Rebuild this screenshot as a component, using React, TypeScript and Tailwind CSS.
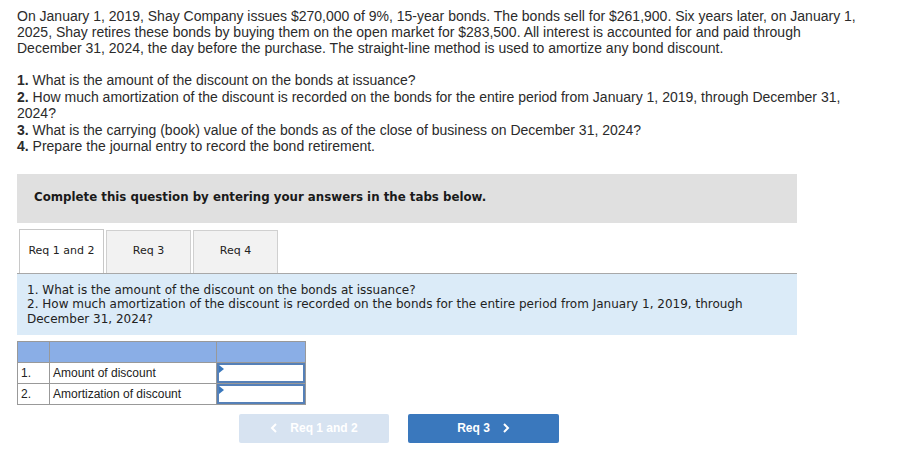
import React from "react";

const sans = { fontFamily: '"Liberation Sans", Arial, sans-serif' };
const verd = { fontFamily: '"DejaVu Sans", Verdana, sans-serif' };

export default function App() {
  return (
    <div className="w-[906px] h-[458px] bg-white pl-[17px] pt-[8px] text-[#2b2b2b] overflow-hidden" style={sans}>
      <div>
        <p className="text-[14px] leading-[16px] w-[885px]">
          On January 1, 2019, Shay Company issues $270,000 of 9%, 15-year bonds. The bonds sell for $261,900. Six years later, on January 1,
          <br />
          2025, Shay retires these bonds by buying them on the open market for $283,500. All interest is accounted for and paid through
          <br />
          December 31, 2024, the day before the purchase. The straight-line method is used to amortize any bond discount.
        </p>
        <div className="mt-[16px] text-[14px] leading-[16.5px] w-[885px]">
          <p><b>1.</b> What is the amount of the discount on the bonds at issuance?</p>
          <p>
            <b>2.</b> How much amortization of the discount is recorded on the bonds for the entire period from January 1, 2019, through December 31,
            <br />
            2024?
          </p>
          <p><b>3.</b> What is the carrying (book) value of the bonds as of the close of business on December 31, 2024?</p>
          <p><b>4.</b> Prepare the journal entry to record the bond retirement.</p>
        </div>
      </div>

      <div className="mt-[19px] w-[780px] h-[49px] bg-[#e0e0e0] flex items-center pl-[17px]" style={verd}>
        <span className="text-[11.8px] font-bold text-[#1a1a1a]">Complete this question by entering your answers in the tabs below.</span>
      </div>

      <div className="mt-[6px] w-[780px] flex items-end gap-[2px] pl-[2px] h-[44px] relative" style={verd}>
        <div className="w-[85px] h-[44px] bg-white border border-b-0 border-[#c8c8c8] flex items-center justify-center text-[11px] text-[#222] relative z-10">Req 1 and 2</div>
        <div className="w-[85px] h-[43px] bg-[#f2f2f2] border border-b-0 border-[#d0d0d0] flex items-center justify-center text-[11px] text-[#222]">Req 3</div>
        <div className="w-[85px] h-[43px] bg-[#f2f2f2] border border-b-0 border-[#d0d0d0] flex items-center justify-center text-[11px] text-[#222]">Req 4</div>
      </div>
      <div className="w-[780px] h-[62px] bg-[#dbebf8] border-t border-[#a8a8a8] pl-[10px] pt-[9px] text-[12px] leading-[14.5px] text-[#222]" style={verd}>
        <p>1. What is the amount of the discount on the bonds at issuance?</p>
        <p>2. How much amortization of the discount is recorded on the bonds for the entire period from January 1, 2019, through</p>
        <p>December 31, 2024?</p>
      </div>

      <table className="mt-[6px] border-collapse text-[12px] text-[#222]" style={sans}>
        <tbody>
          <tr className="h-[21px] bg-[#8aaee6]">
            <td className="w-[32px] border border-[#999]"></td>
            <td className="w-[167px] border border-[#999]"></td>
            <td className="w-[89px] border border-[#999]"></td>
          </tr>
          <tr className="h-[21px]">
            <td className="border border-[#999] pl-[3px]">1.</td>
            <td className="border border-[#999] pl-[3px]">Amount of discount</td>
            <td className="border border-[#999] p-0">
              <div className="relative h-[20px] border-2 border-[#5580b8] bg-white">
                <div className="absolute left-0 top-0 w-0 h-0 border-t-[4px] border-b-[4px] border-l-[5px] border-t-transparent border-b-transparent border-l-[#3a78bd]" />
              </div>
            </td>
          </tr>
          <tr className="h-[21px]">
            <td className="border border-[#999] pl-[3px]">2.</td>
            <td className="border border-[#999] pl-[3px]">Amortization of discount</td>
            <td className="border border-[#999] p-0">
              <div className="relative h-[20px] border-2 border-[#5580b8] bg-white">
                <div className="absolute left-0 top-0 w-0 h-0 border-t-[4px] border-b-[4px] border-l-[5px] border-t-transparent border-b-transparent border-l-[#3a78bd]" />
              </div>
            </td>
          </tr>
        </tbody>
      </table>

      <div className="mt-[9px] flex gap-[19px] pl-[222px]" style={sans}>
        <div className="w-[150px] h-[29px] rounded-[2px] bg-[#d7e3f1] flex items-center justify-center text-white font-bold text-[12px]">
          <svg width="8" height="10" viewBox="0 0 8 10" className="mr-[12px]"><path d="M6 1 L2 5 L6 9" stroke="white" strokeWidth="2" fill="none" /></svg>
          Req 1 and 2
        </div>
        <div className="w-[151px] h-[29px] rounded-[2px] bg-[#3a78bd] flex items-center justify-center text-white font-bold text-[12px]">
          Req 3
          <svg width="8" height="10" viewBox="0 0 8 10" className="ml-[12px]"><path d="M2 1 L6 5 L2 9" stroke="white" strokeWidth="2" fill="none" /></svg>
        </div>
      </div>
    </div>
  );
}
